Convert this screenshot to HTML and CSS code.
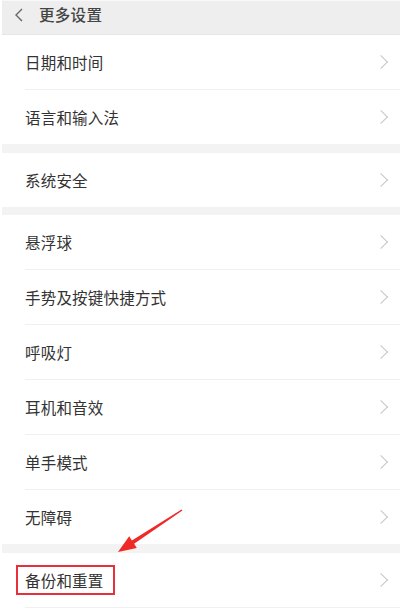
FILE: index.html
```html
<!DOCTYPE html>
<html lang="zh-CN">
<head>
<meta charset="utf-8">
<title>更多设置</title>
<link rel="stylesheet" href="styles.css">
</head>
<body>
<div class="page">
  <header class="topbar">
    <svg class="back" width="10" height="14" viewBox="0 0 10 14"><path d="M8 1 L2 7 L8 13" fill="none" stroke="#666" stroke-width="1.4"/></svg>
    <span class="title">更多设置</span>
  </header>

  <section class="group">
    <div class="row"><span class="label">日期和时间</span><span class="chev"></span></div>
    <div class="row"><span class="label">语言和输入法</span><span class="chev"></span></div>
  </section>
  <div class="gap"></div>
  <section class="group">
    <div class="row"><span class="label">系统安全</span><span class="chev"></span></div>
  </section>
  <div class="gap gap-8"></div>
  <section class="group">
    <div class="row"><span class="label">悬浮球</span><span class="chev"></span></div>
    <div class="row"><span class="label">手势及按键快捷方式</span><span class="chev"></span></div>
    <div class="row"><span class="label">呼吸灯</span><span class="chev"></span></div>
    <div class="row"><span class="label">耳机和音效</span><span class="chev"></span></div>
    <div class="row"><span class="label">单手模式</span><span class="chev"></span></div>
    <div class="row"><span class="label">无障碍</span><span class="chev"></span></div>
  </section>
  <div class="gap"></div>
  <section class="group">
    <div class="row row-last"><span class="label highlighted">备份和重置</span><span class="chev"></span></div>
    <div class="row"><span class="label"></span></div>
  </section>

  <svg class="arrow" width="400" height="616" viewBox="0 0 400 616">
    <polygon points="181.6,509.5 131.9,540.4 129.2,536.2 118,552 136.8,548 134.1,543.8 182.4,510.5" fill="#f02828"/>
  </svg>
</div>
</body>
</html>
```
FILE: styles.css
```css
html, body {
  margin: 0;
  padding: 0;
  background: #ffffff;
}
body {
  font-family: "Noto Sans CJK SC", "Noto Sans", sans-serif;
  color: #333333;
  width: 400px;
  height: 616px;
  overflow: hidden;
}
.page {
  position: relative;
  padding-left: 2px;
  background: #ffffff;
  height: 616px;
}
.topbar {
  height: 35px;
  box-sizing: border-box;
  border-top: 1px solid #f8f8f8;
  background: #eeeeee;
  display: flex;
  align-items: flex-start;
  padding-top: 4px;
  padding-left: 12px;
  gap: 15px;
  border-bottom: 1px solid #e6e6e6;
}
.back {
  margin-top: 3px;
}
.title {
  font-size: 15.5px;
  line-height: 18px;
  font-weight: 500;
  color: #444444;
  letter-spacing: 0.3px;
}
.group {
  background: #ffffff;
}
.row {
  height: 54px;
  margin-left: 23px;
  padding-right: 12px;
  display: flex;
  align-items: center;
  justify-content: space-between;
  border-bottom: 1px solid #f0f0f0;
  position: relative;
}
.group .row:last-child {
  border-bottom: none;
}
.group .row.row-last {
  border-bottom: 1px solid #f0f0f0;
}
.label {
  font-size: 15.5px;
  line-height: 20px;
  color: #333333;
  letter-spacing: 0.2px;
}
.highlighted {
  outline: 2px solid #e8303a;
  outline-offset: 0;
  padding: 3px 9px 3px 7px;
  margin-left: -7px;
}
.chev {
  width: 9px;
  height: 9px;
  border-top: 1.2px solid #c6c6c6;
  border-right: 1.2px solid #c6c6c6;
  transform: rotate(45deg);
  margin-right: 2px;
}
.gap {
  height: 9px;
  background: #f3f3f3;
}
.gap-8 {
  height: 8px;
}
.arrow {
  position: absolute;
  left: 0;
  top: 0;
  pointer-events: none;
}
```
